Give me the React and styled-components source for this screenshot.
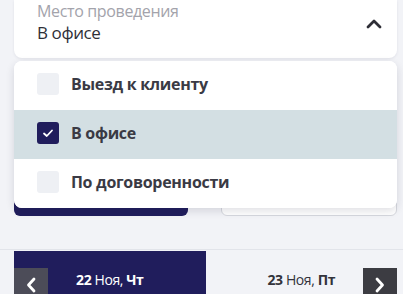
import styled, { createGlobalStyle } from 'styled-components'

const GlobalStyle = createGlobalStyle`
  html, body {
    margin: 0;
    padding: 0;
    background: #f2f3f7;
    font-family: 'Open Sans', 'Noto Sans', sans-serif;
  }
`

const Page = styled.div`
  width: 403px;
  height: 294px;
  overflow: hidden;
  position: relative;
`

const Top = styled.div`
  padding: 0 6px 0 14px;
  position: relative;
`

const SelectCard = styled.div`
  height: 58px;
  background: #fff;
  border-radius: 0 0 8px 8px;
  box-shadow: 0 1px 3px rgba(30, 30, 60, 0.08);
  display: flex;
  align-items: center;
  justify-content: space-between;
  padding: 0 15px 0 23px;
  box-sizing: border-box;
`

const SelectText = styled.div`
  display: flex;
  flex-direction: column;
  margin-top: -14px;
`

const Label = styled.span`
  font-size: 16px;
  line-height: 22px;
  letter-spacing: -0.35px;
  color: #a3a3ab;
`

const Value = styled.span`
  font-size: 17px;
  line-height: 22px;
  letter-spacing: -0.4px;
  color: #2f2f37;
`

const Up = styled.span`
  display: flex;
  margin-top: -11px;
`

const Buttons = styled.div`
  display: flex;
  gap: 33px;
  margin-top: 110px;
`

const Btn = styled.div`
  flex: 1;
  height: 48px;
  border-radius: 6px;
  box-sizing: border-box;
  background: ${p => (p.$primary ? '#201d5c' : '#fff')};
  border: ${p => (p.$primary ? 'none' : '1px solid #d6d8de')};
  margin-bottom: ${p => (p.$primary ? '0' : '3px')};
`

const Dropdown = styled.ul`
  position: absolute;
  top: 61px;
  left: 14px;
  right: 6px;
  margin: 0;
  padding: 0;
  list-style: none;
  background: #fff;
  border-radius: 8px;
  overflow: hidden;
  box-shadow: 0 3px 8px rgba(30, 30, 60, 0.14);
`

const Option = styled.li`
  height: 49px;
  display: flex;
  align-items: center;
  gap: 12px;
  padding: 0 0 4px 23px;
  box-sizing: border-box;
  background: ${p => (p.$active ? '#d3dfe3' : '#fff')};
`

const Box = styled.span`
  width: 22px;
  height: 22px;
  border-radius: 3px;
  background: ${p => (p.$checked ? '#201d5c' : '#eef0f4')};
  display: flex;
  align-items: center;
  justify-content: center;
`

const OptionText = styled.span`
  font-size: 16px;
  font-weight: 700;
  letter-spacing: -0.3px;
  color: #3a3a44;
`

const Divider = styled.div`
  height: 1px;
  background: #e2e4ea;
  margin-top: 30px;
`

const Days = styled.div`
  position: relative;
  display: flex;
  margin: 1px 6px 0 14px;
  height: 60px;
`

const Day = styled.div`
  flex: 1;
  display: flex;
  justify-content: center;
  padding-top: 20px;
  box-sizing: border-box;
  font-size: 14px;
  line-height: 18px;
  letter-spacing: -0.4px;
  background: ${p => (p.$active ? '#201d5c' : 'transparent')};
  color: ${p => (p.$active ? '#fff' : '#33333b')};
  b { font-weight: 700; }
`

const Arrow = styled.div`
  position: absolute;
  top: 17px;
  ${p => (p.$side === 'left' ? 'left: 0;' : 'right: 0;')}
  width: 34px;
  height: 34px;
  background: ${p => (p.$side === 'left' ? '#4c4c58' : '#3c3c42')};
  display: flex;
  justify-content: center;
  padding-top: 9px;
  box-sizing: border-box;
`

const options = [
  { label: 'Выезд к клиенту', checked: false },
  { label: 'В офисе', checked: true },
  { label: 'По договоренности', checked: false },
]

function Check() {
  return (
    <svg width="12" height="10" viewBox="0 0 12 10">
      <path d="M2 5.5 L4.8 8 L10 2.5" fill="none" stroke="#fff" strokeWidth="1.8" strokeLinecap="round" strokeLinejoin="round" />
    </svg>
  )
}

function Chevron({ dir }) {
  const d = dir === 'up' ? 'M2 9 L8 3 L14 9' : dir === 'left' ? 'M9 2 L3.5 8 L9 14' : 'M3 2 L8.5 8 L3 14'
  const size = dir === 'up' ? [16, 12] : [12, 16]
  return (
    <svg width={size[0]} height={size[1]} viewBox={`0 0 ${size[0]} ${size[1]}`}>
      <path d={d} fill="none" stroke={dir === 'up' ? '#2e2e36' : '#fff'} strokeWidth="2.8" strokeLinecap="round" strokeLinejoin="round" />
    </svg>
  )
}

function App() {
  return (
    <Page>
      <GlobalStyle />
      <Top>
        <SelectCard>
          <SelectText>
            <Label>Место проведения</Label>
            <Value>В офисе</Value>
          </SelectText>
          <Up><Chevron dir="up" /></Up>
        </SelectCard>
        <Buttons>
          <Btn $primary />
          <Btn />
        </Buttons>
      </Top>
      <Dropdown>
        {options.map(o => (
          <Option key={o.label} $active={o.checked}>
            <Box $checked={o.checked}>{o.checked ? <Check /> : null}</Box>
            <OptionText>{o.label}</OptionText>
          </Option>
        ))}
      </Dropdown>
      <Divider />
      <Days>
        <Day $active>
          <span><b>22</b> Ноя, <b>Чт</b></span>
        </Day>
        <Day>
          <span><b>23</b> Ноя, <b>Пт</b></span>
        </Day>
        <Arrow $side="left"><Chevron dir="left" /></Arrow>
        <Arrow $side="right"><Chevron dir="right" /></Arrow>
      </Days>
    </Page>
  )
}

export default App
